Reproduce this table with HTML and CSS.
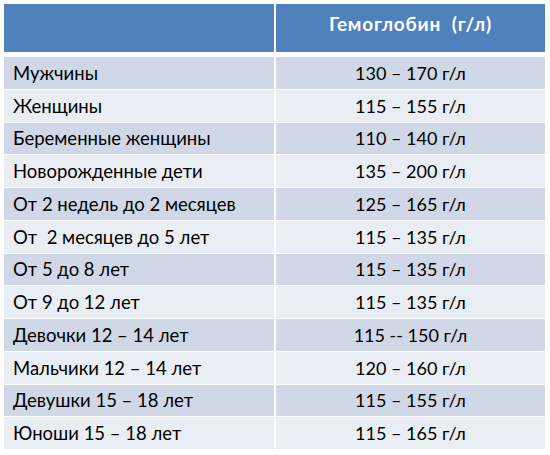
FILE: index.html
```html
<!DOCTYPE html>
<html lang="ru">
<head>
<meta charset="utf-8">
<link rel="stylesheet" href="styles.css">
</head>
<body>
<div class="table">
  <div class="row head"><div class="c1"></div><div class="c2">Гемоглобин&nbsp; (г/л)</div></div>
  <div class="row odd"><div class="c1">Мужчины</div><div class="c2">130 – 170 г/л</div></div>
  <div class="row even"><div class="c1">Женщины</div><div class="c2">115 – 155 г/л</div></div>
  <div class="row odd"><div class="c1">Беременные женщины</div><div class="c2">110 – 140 г/л</div></div>
  <div class="row even"><div class="c1">Новорожденные дети</div><div class="c2">135 – 200 г/л</div></div>
  <div class="row odd"><div class="c1">От 2 недель до 2 месяцев</div><div class="c2">125 – 165 г/л</div></div>
  <div class="row even"><div class="c1">От&nbsp; 2 месяцев до 5 лет</div><div class="c2">115 – 135 г/л</div></div>
  <div class="row odd"><div class="c1">От 5 до 8 лет</div><div class="c2">115 – 135 г/л</div></div>
  <div class="row even"><div class="c1">От 9 до 12 лет</div><div class="c2">115 – 135 г/л</div></div>
  <div class="row odd"><div class="c1">Девочки 12 – 14 лет</div><div class="c2">115 -- 150 г/л</div></div>
  <div class="row even"><div class="c1">Мальчики 12 – 14 лет</div><div class="c2">120 – 160 г/л</div></div>
  <div class="row odd"><div class="c1">Девушки 15 – 18 лет</div><div class="c2">115 – 155 г/л</div></div>
  <div class="row even"><div class="c1">Юноши 15 – 18 лет</div><div class="c2">115 – 165 г/л</div></div>
</div>
</body>
</html>
```
FILE: styles.css
```css
html, body { margin: 0; padding: 0; background: #fff; }
body { padding: 4px 5px 0 4px; font-family: Lato, "Open Sans", sans-serif; color: #000; }
.table { display: flex; flex-direction: column; width: 541px; }
.row { display: grid; grid-template-columns: 270px 1fr; column-gap: 2px; height: 32.75px; }
.row + .row { border-top: 1px solid #fff; box-sizing: border-box; }
.row.head { height: 48px; border-bottom: 4px solid #fff; box-sizing: content-box; }
.head .c1, .head .c2 { background: #4f81bd; }
.head .c2 { display: block; color: #fff; font-weight: bold; font-size: 19px; letter-spacing: 0.8px; text-align: center; padding-top: 8px; box-sizing: border-box; }
.odd .c1, .odd .c2 { background: #d0d8e8; }
.even .c1, .even .c2 { background: #e9edf4; }
.c1, .c2 { font-size: 18px; display: flex; align-items: center; white-space: nowrap; }
.c1 { padding-left: 9px; font-size: 18.5px; }
.c2 { justify-content: center; }
```
